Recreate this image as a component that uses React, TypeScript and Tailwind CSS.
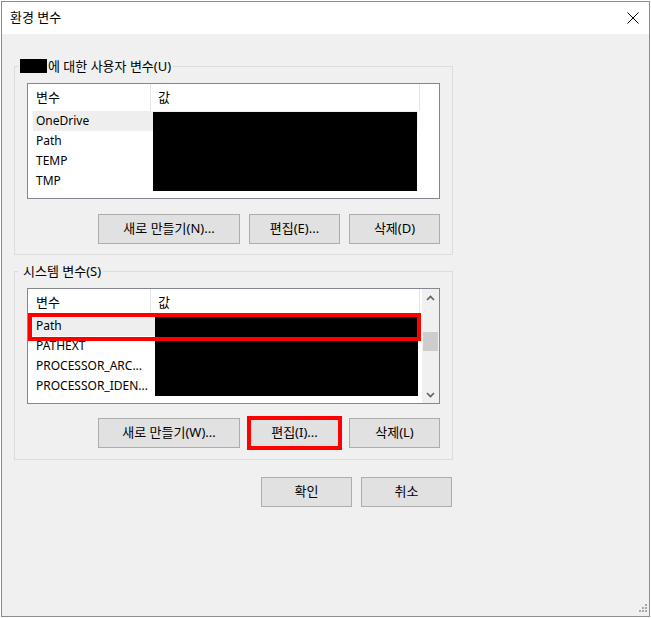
import type { ReactNode } from "react";

const FONT = "font-['Noto_Sans','Noto_Sans_CJK_KR',sans-serif]";

function Btn({ children, w = "w-[91px]" }: { children: ReactNode; w?: string }) {
  return (
    <div
      className={`flex h-[30px] ${w} items-center justify-center border border-[#adadad] bg-[#e1e1e1] text-[13px] text-black`}
    >
      {children}
    </div>
  );
}

function Chevron({ up }: { up?: boolean }) {
  return (
    <svg width="9" height="6" viewBox="0 0 9 6" className="block">
      <path
        d={up ? "M1 5 L4.5 1.5 L8 5" : "M1 1 L4.5 4.5 L8 1"}
        fill="none"
        stroke="#606060"
        strokeWidth="1.6"
      />
    </svg>
  );
}

function VarList({
  names,
  scroll,
  black,
  redRow,
}: {
  names: string[];
  scroll?: boolean;
  black: string;
  redRow?: boolean;
}) {
  return (
    <div className="flex h-[116px] w-[413px] border border-[#828790] bg-white">
      <div className="relative flex-1">
        <div className="flex h-[27px] items-center text-[13px] text-black">
          <div className="flex h-full w-[123px] items-center border-r border-[#e5e5e5] pl-[8px]">변수</div>
          <div className="flex h-full w-[269px] items-center border-r border-[#e5e5e5] pl-[7px]">값</div>
        </div>
        {names.map((n, i) => (
          <div key={n} className="flex h-[20px] items-center pl-[5px] text-[12px] leading-[20px] text-black">
            <div className={`h-full w-[385px] pl-[3px] ${i === 0 ? "bg-[#eeeeee]" : ""}`}>{n}</div>
          </div>
        ))}
        <div className={`absolute bg-black ${black}`} />
        {redRow ? (
          <div className="absolute left-0 top-[24px] h-[28px] w-[393px] border-[4px] border-[#ff0000]" />
        ) : null}
      </div>
      {scroll ? (
        <div className="flex w-[17px] flex-col bg-[#f0f0f0]">
          <div className="flex h-[17px] items-center justify-center">
            <Chevron up />
          </div>
          <div className="mx-[1px] mt-[26px] h-[19px] bg-[#cdcdcd]" />
          <div className="flex-1" />
          <div className="flex h-[17px] items-center justify-center">
            <Chevron />
          </div>
        </div>
      ) : null}
    </div>
  );
}

function Group({ legend, children }: { legend: ReactNode; children: ReactNode }) {
  return (
    <div className="relative h-[189px] w-[439px] border border-[#dcdcdc] pl-[12px] pt-[16px]">
      <div className="absolute -top-[9px] left-[3px] flex h-[16px] items-center bg-[#f0f0f0] px-[2px] text-[13px] leading-[16px] text-black">
        {legend}
      </div>
      {children}
    </div>
  );
}

export default function App() {
  return (
    <div className={`h-[618px] w-[651px] bg-white pl-[1px] pt-[1px] ${FONT}`}>
      <div className="relative flex h-[616px] w-[649px] flex-col border border-[#8c8c8c] bg-[#f0f0f0]">
        <div className="flex h-[32px] items-center justify-between bg-white pl-[8px] pr-[10px]">
          <span className="text-[13px] text-black">환경 변수</span>
          <svg width="12" height="12" viewBox="0 0 12 12" className="block">
            <path d="M0.5 0.5 L11.5 11.5 M11.5 0.5 L0.5 11.5" stroke="#000" strokeWidth="1" />
          </svg>
        </div>

        <div className="flex flex-1 flex-col pl-[12px] pt-[32px]">
          <Group
            legend={
              <>
                <span className="mr-[1px] inline-block h-[14px] w-[27px] bg-black" />
                에 대한 사용자 변수(U)
              </>
            }
          >
            <VarList
              names={["OneDrive", "Path", "TEMP", "TMP"]}
              black="left-[125px] top-[28px] h-[79px] w-[264px]"
            />
            <div className="mt-[15px] flex justify-end gap-[9px] pr-[12px]">
              <Btn w="w-[142px]">새로 만들기(N)...</Btn>
              <Btn>편집(E)...</Btn>
              <Btn>삭제(D)</Btn>
            </div>
          </Group>

          <div className="mt-[16px]">
            <Group legend={<span className="pl-[3px]">시스템 변수(S)</span>}>
              <VarList
                names={["Path", "PATHEXT", "PROCESSOR_ARC...", "PROCESSOR_IDEN..."]}
                black="left-[127px] top-[27px] h-[80px] w-[263px]"
                scroll
                redRow
              />
              <div className="mt-[14px] flex justify-end gap-[9px] pr-[12px]">
                <Btn w="w-[142px]">새로 만들기(W)...</Btn>
                <div className="relative">
                  <Btn>편집(I)...</Btn>
                  <div className="absolute -inset-[2px] border-[4px] border-[#ff0000]" />
                </div>
                <Btn>삭제(L)</Btn>
              </div>
            </Group>
          </div>

          <div className="mt-[17px] flex w-[439px] justify-end gap-[9px] pr-[1px]">
            <Btn>확인</Btn>
            <Btn>취소</Btn>
          </div>
        </div>

        <svg width="10" height="10" viewBox="0 0 10 10" className="absolute bottom-[2px] right-[2px] block">
          <rect x="8" y="0" width="2" height="2" fill="#a8a8a8" />
          <rect x="5" y="3" width="2" height="2" fill="#a8a8a8" />
          <rect x="8" y="3" width="2" height="2" fill="#a8a8a8" />
          <rect x="2" y="6" width="2" height="2" fill="#a8a8a8" />
          <rect x="5" y="6" width="2" height="2" fill="#a8a8a8" />
          <rect x="8" y="6" width="2" height="2" fill="#a8a8a8" />
        </svg>
      </div>
    </div>
  );
}
